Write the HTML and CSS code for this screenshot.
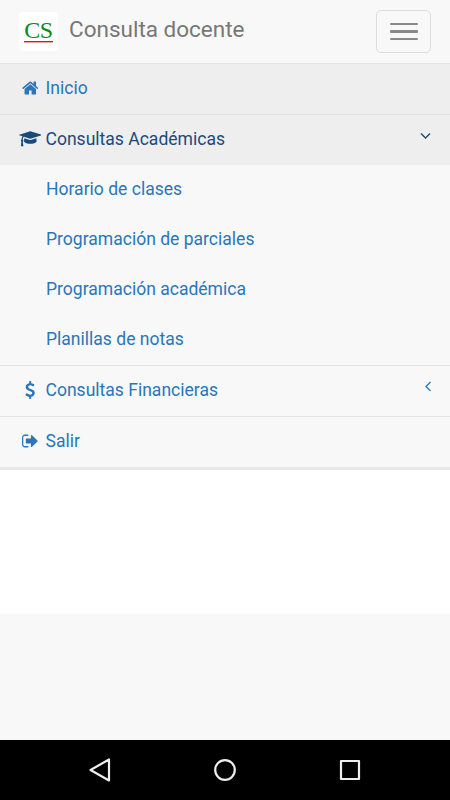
FILE: index.html
```
<!DOCTYPE html>
<html lang="es">
<head>
    <meta charset="UTF-8">
    <meta name="viewport" content="width=device-width, initial-scale=1.0">
    <title>Consulta docente</title>
    <link rel="stylesheet" href="styles.css">
</head>
<body>

<header class="navbar">
    <a class="logo" href="#"><span>CS</span></a>
    <a class="brand" href="#">Consulta docente</a>
    <button class="toggle" aria-label="Menu">
        <span></span>
        <span></span>
        <span></span>
    </button>
</header>

<nav class="menu">
    <a class="item active" href="#">
        <span class="icon">
            <svg width="16.6" height="18" viewBox="0 0 1664 1792"><path d="M1408 992v480q0 26-19 45t-45 19h-384v-384h-256v384h-384q-26 0-45-19t-19-45v-480q0-1 .5-3t.5-3l575-474 575 474q1 2 1 6zm223-69l-62 74q-8 9-21 11h-3q-13 0-21-7l-692-577-692 577q-12 8-24 7-13-2-21-11l-62-74q-8-10-7-23.500t11-21.500l719-599q32-26 76-26t76 26l244 204v-195q0-14 9-23t23-9h192q14 0 23 9t9 23v408l219 182q10 8 11 21.500t-7 23.500z"/></svg>
        </span>
        Inicio
    </a>
    <a class="item active open" href="#">
        <span class="icon">
            <svg width="22.600" height="17.600" viewBox="0 0 2304 1792"><path d="M1774 836l18 316q4 69-82 128t-235 93.500-323 34.500-323-34.500-235-93.500-82-128l18-316 574 181q22 7 48 7t48-7zm530-324q0 23-22 31l-1120 352q-4 1-10 1t-10-1l-652-206q-43 34-71 111.500t-34 178.500q63 36 63 109 0 69-58 107l58 433q2 14-8 25-9 11-24 11h-192q-15 0-24-11-10-11-8-25l58-433q-58-38-58-107 0-73 65-111 11-207 98-330l-333-104q-22-8-22-31t22-31l1120-352q4-1 10-1t10 1l1120 352q22 8 22 31z"/></svg>
        </span>
        Consultas Académicas
        <svg class="arrow" width="11" height="8" viewBox="0 0 11 8"><path d="M1 1.500l4.500 4.500 4.500-4.500"/></svg>
    </a>
    <div class="submenu">
        <a href="#">Horario de clases</a>
        <a href="#">Programación de parciales</a>
        <a href="#">Programación académica</a>
        <a href="#">Planillas de notas</a>
    </div>
    <a class="item" href="#">
        <span class="icon">
            <svg width="10.200" height="18" viewBox="0 0 1024 1792"><path d="M978 1185q0 153-99.500 263.500t-258.500 136.500v175q0 14-9 23t-23 9h-135q-13 0-22.500-9.500t-9.500-22.500v-175q-66-9-127.500-31t-101.500-44.500-74-48-46.500-37.500-17.500-18q-17-21-2-41l103-135q7-10 23-12 15-2 24 9l2 2q113 99 243 125 37 8 74 8 81 0 142.500-43t61.500-122q0-28-15-53t-33.500-42-58.500-37.500-66-32-80-32.500q-39-16-61.500-25t-61.500-26.500-62.500-31-56.500-35.500-53.500-42.500-43.500-49-35.500-58-21-66.500-8.500-78q0-138 98-242t255-134v-180q0-13 9.500-22.500t22.500-9.500h135q14 0 23 9t9 23v176q57 6 110.500 23t87 33.500 63.500 37.500 39 29 15 14q17 18 5 38l-81 146q-8 15-23 16-14 3-27-7-3-3-14.500-12t-39-26.500-58.500-32-74.500-26-85.500-11.500q-95 0-155 43t-60 111q0 26 8.500 48t29.500 41.500 39.500 33 56 31 60.500 27 70 27.500q53 20 81 31.500t76 35 75.500 42.500 62 50 53 63.500 31.500 76.500 13 94z"/></svg>
        </span>
        Consultas Financieras
        <svg class="arrow" width="6" height="11" viewBox="0 0 6 11"><path d="M5.500 1l-4.500 4.500 4.500 4.500"/></svg>
    </a>
    <a class="item" href="#">
        <span class="icon">
            <svg width="16.600" height="18" viewBox="0 0 1664 1792"><path d="M640 1440q0 4 1 20t.5 26.500-3 23.500-10 19.500-20.500 6.500h-320q-119 0-203.500-84.500t-84.500-203.500v-704q0-119 84.500-203.500t203.500-84.500h320q13 0 22.500 9.500t9.500 22.500q0 4 1 20t.5 26.500-3 23.500-10 19.500-20.500 6.500h-320q-66 0-113 47t-47 113v704q0 66 47 113t113 47h312l11.500 1 11.500 3 8 5.500 7 9 2 13.500zm928-544q0 26-19 45l-544 544q-19 19-45 19t-45-19-19-45v-288h-448q-26 0-45-19t-19-45v-384q0-26 19-45t45-19h448v-288q0-26 19-45t45-19 45 19l544 544q19 19 19 45z"/></svg>
        </span>
        Salir
    </a>
</nav>

<main class="page"></main>

<!-- Android navigation buttons -->
<footer class="system-bar">
    <svg width="24" height="26" viewBox="0 0 24 26"><path d="M21 2.500v21L2.500 13z"/></svg>
    <svg width="24" height="26" viewBox="0 0 24 26"><circle cx="12" cy="13" r="9.800"/></svg>
    <svg width="24" height="26" viewBox="0 0 24 26"><rect x="3" y="4" width="18" height="18"/></svg>
</footer>

</body>
</html>
```
FILE: styles.css
```
* {
    box-sizing: border-box;
}

body {
    margin: 0;
    height: 800px;
    display: flex;
    flex-direction: column;
    background-color: #f8f8f8;
    font-family: Roboto, sans-serif;
    font-size: 17.55px;
}

a {
    color: #2a76b8;
    text-decoration: none;
}

/* Top bar */
.navbar {
    height: 63px;
    padding: 0 19px;
    display: flex;
    align-items: center;
}

.logo {
    width: 39px;
    height: 39px;
    display: flex;
    justify-content: center;
    background-color: #fff;
    border-radius: 4px;
    font-family: "Liberation Serif", serif;
    font-size: 24px;
    line-height: 24px;
    letter-spacing: -0.5px;
    color: #0a8a1a;
}

.logo span {
    height: 24px;
    margin-top: 6px;
    border-bottom: 1px solid #d8141c;
    box-shadow: 0 1px #f3a5a8;
}

.brand {
    margin-left: 11px;
    padding-bottom: 5px;
    font-size: 22.5px;
    color: #777;
}

.toggle {
    width: 55px;
    height: 43px;
    margin-left: auto;
    padding: 0;
    display: flex;
    flex-direction: column;
    align-items: center;
    justify-content: center;
    gap: 5px;
    background: transparent;
    border: 1px solid #ddd;
    border-radius: 5px;
}

.toggle span {
    width: 28px;
    height: 2.5px;
    border-radius: 1px;
    background-color: #888;
}

/* Menu */
.menu {
    border-bottom: 3px solid #e7e7e7;
}

.item {
    height: 51px;
    padding: 0 19px 3px 18px;
    display: flex;
    align-items: center;
    border-top: 1px solid #e3e3e3;
}

.item.active {
    background-color: #eee;
}

.item.open {
    color: #1b4a7a;
}

.icon {
    width: 24px;
    margin-right: 3.5px;
    display: flex;
    justify-content: center;
}

.icon svg {
    fill: currentColor;
}

.arrow {
    margin: 0 0 6px auto;
    fill: none;
    stroke: currentColor;
    stroke-width: 1.3;
}

.submenu a {
    height: 50px;
    padding: 0 46px 2px;
    display: flex;
    align-items: center;
}

.page {
    height: 144px;
    background-color: #fff;
}

/* System bar */
.system-bar {
    height: 60px;
    margin-top: auto;
    padding: 0 88px;
    display: flex;
    align-items: center;
    justify-content: space-between;
    background-color: #000;
}

.system-bar svg {
    fill: none;
    stroke: #eee;
    stroke-width: 2.2;
    stroke-linejoin: round;
}
```
